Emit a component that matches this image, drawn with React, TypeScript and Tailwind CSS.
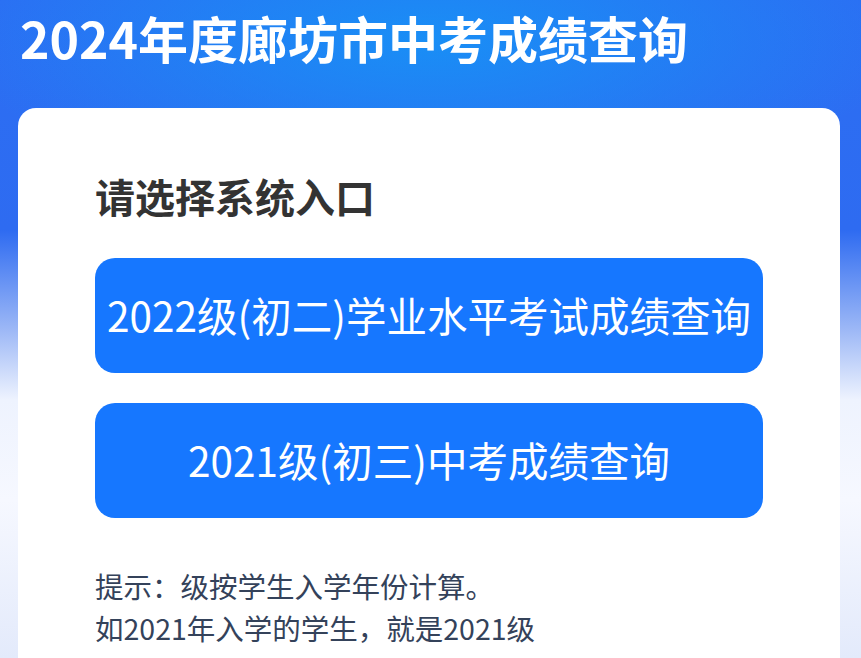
const entries = [
  '2022级(初二)学业水平考试成绩查询',
  '2021级(初三)中考成绩查询',
];

export default function App() {
  return (
    <div
      className="h-[658px] w-full overflow-hidden bg-[radial-gradient(ellipse_55%_160px_at_50%_40px,rgba(22,148,246,0.85),rgba(22,148,246,0)),linear-gradient(180deg,#2b6ff3_0px,#2e6bf1_230px,#9db8f6_330px,#eef3fe_400px,#f6f8ff_500px,#e3eafb_658px)]"
      style={{ fontFamily: '"Noto Sans CJK SC", "Noto Sans", sans-serif' }}
    >
      <h1 className="px-5 pt-[2px] text-[50px] font-bold leading-[70px] text-white">
        2024年度廊坊市中考成绩查询
      </h1>

      <div className="ml-[18px] mr-[21px] mt-[36px] h-[600px] rounded-[18px] bg-white px-[77px] pt-[58px]">
        <h2 className="text-[40px] font-bold leading-[60px] text-[#333333]">请选择系统入口</h2>

        <div className="mt-[32px] flex flex-col gap-[30px]">
          {entries.map((label) => (
            <button
              key={label}
              className="flex h-[115px] w-full items-center justify-center rounded-[20px] bg-[#1677ff] text-[40.5px] leading-none text-white"
            >
              {label}
            </button>
          ))}
        </div>

        <div className="mt-[47px] text-[28.5px] leading-[42px] text-[#34425a]">
          <p>提示：级按学生入学年份计算。</p>
          <p>如2021年入学的学生，就是2021级</p>
        </div>
      </div>
    </div>
  );
}
